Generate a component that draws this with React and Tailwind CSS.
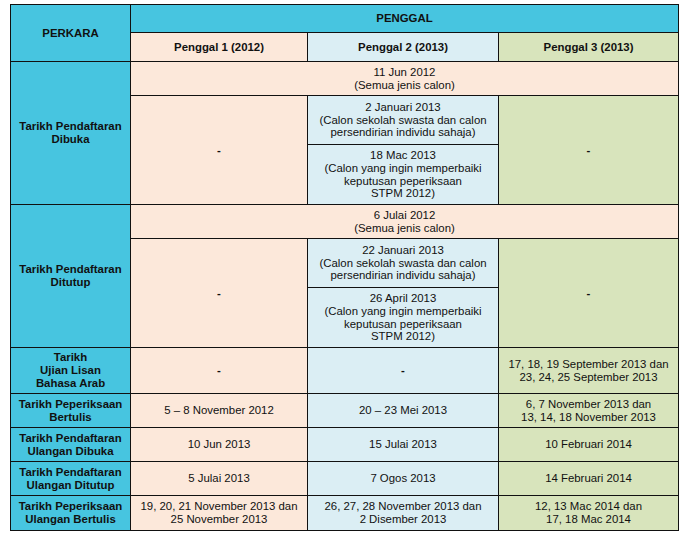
import React from "react";

const cyan = "bg-[#47c5e0]";
const peach = "bg-[#fce8da]";
const blue = "bg-[#dbeef4]";
const green = "bg-[#d8e4bc]";

const cell = "border border-[#111] text-center align-middle px-1";

const Label = ({ children, rowSpan }) => (
  <td rowSpan={rowSpan} className={`${cell} ${cyan} font-bold`}>
    {children}
  </td>
);

const Lines = ({ lines }) =>
  lines.map((l, i) => (
    <React.Fragment key={i}>
      {l}
      {i < lines.length - 1 && <br />}
    </React.Fragment>
  ));

const simpleRows = [
  {
    h: "h-[46px]",
    label: ["Tarikh", "Ujian Lisan", "Bahasa Arab"],
    p1: ["-"],
    p2: ["-"],
    p3: ["17, 18, 19 September 2013 dan", "23, 24, 25 September 2013"],
  },
  {
    h: "h-[34px]",
    label: ["Tarikh Peperiksaan", "Bertulis"],
    p1: ["5 \u2013 8 November 2012"],
    p2: ["20 \u2013 23 Mei 2013"],
    p3: ["6, 7 November 2013 dan", "13, 14, 18 November 2013"],
  },
  {
    h: "h-[34px]",
    label: ["Tarikh Pendaftaran", "Ulangan Dibuka"],
    p1: ["10 Jun 2013"],
    p2: ["15 Julai 2013"],
    p3: ["10 Februari 2014"],
  },
  {
    h: "h-[34px]",
    label: ["Tarikh Pendaftaran", "Ulangan Ditutup"],
    p1: ["5 Julai 2013"],
    p2: ["7 Ogos 2013"],
    p3: ["14 Februari 2014"],
  },
  {
    h: "h-[35px]",
    label: ["Tarikh Peperiksaan", "Ulangan Bertulis"],
    p1: ["19, 20, 21 November 2013 dan", "25 November 2013"],
    p2: ["26, 27, 28 November 2013 dan", "2 Disember 2013"],
    p3: ["12, 13 Mac 2014 dan", "17, 18 Mac 2014"],
  },
];

const RegGroup = ({ title, date, first, second }) => (
  <>
    <tr className="h-[34px]">
      <Label rowSpan={3}>
        <Lines lines={title} />
      </Label>
      <td colSpan={3} className={`${cell} ${peach}`}>
        {date}
        <br />
        (Semua jenis calon)
      </td>
    </tr>
    <tr className="h-[49px]">
      <td rowSpan={2} className={`${cell} ${peach} font-bold`}>
        -
      </td>
      <td className={`${cell} ${blue}`}>
        {first}
        <br />
        (Calon sekolah swasta dan calon
        <br />
        persendirian individu sahaja)
      </td>
      <td rowSpan={2} className={`${cell} ${green} font-bold`}>
        -
      </td>
    </tr>
    <tr className="h-[60px]">
      <td className={`${cell} ${blue}`}>
        {second}
        <br />
        (Calon yang ingin memperbaiki
        <br />
        keputusan peperiksaan
        <br />
        STPM 2012)
      </td>
    </tr>
  </>
);

export default function App() {
  return (
    <div className="min-h-screen bg-white pl-[10px] pt-[4px] font-['Liberation_Sans',Arial,sans-serif] text-[11.4px] leading-[12.8px] text-[#111]">
      <table className="w-[668px] table-fixed border-collapse border border-[#111]">
        <colgroup>
          <col className="w-[120px]" />
          <col className="w-[177px]" />
          <col className="w-[191px]" />
          <col className="w-[180px]" />
        </colgroup>
        <tbody>
          <tr className="h-[28px]">
            <Label rowSpan={2}>PERKARA</Label>
            <td colSpan={3} className={`${cell} ${cyan} font-bold`}>
              PENGGAL
            </td>
          </tr>
          <tr className="h-[29px]">
            <td className={`${cell} ${peach} font-bold`}>Penggal 1 (2012)</td>
            <td className={`${cell} ${blue} font-bold`}>Penggal 2 (2013)</td>
            <td className={`${cell} ${green} font-bold`}>Penggal 3 (2013)</td>
          </tr>

          <RegGroup
            title={["Tarikh Pendaftaran", "Dibuka"]}
            date="11 Jun 2012"
            first="2 Januari 2013"
            second="18 Mac 2013"
          />
          <RegGroup
            title={["Tarikh Pendaftaran", "Ditutup"]}
            date="6 Julai 2012"
            first="22 Januari 2013"
            second="26 April 2013"
          />

          {simpleRows.map((r, i) => (
            <tr key={i} className={r.h}>
              <Label>
                <Lines lines={r.label} />
              </Label>
              <td className={`${cell} ${peach} ${r.p1[0] === "-" ? "font-bold" : ""}`}>
                <Lines lines={r.p1} />
              </td>
              <td className={`${cell} ${blue} ${r.p2[0] === "-" ? "font-bold" : ""}`}>
                <Lines lines={r.p2} />
              </td>
              <td className={`${cell} ${green}`}>
                <Lines lines={r.p3} />
              </td>
            </tr>
          ))}
        </tbody>
      </table>
    </div>
  );
}
